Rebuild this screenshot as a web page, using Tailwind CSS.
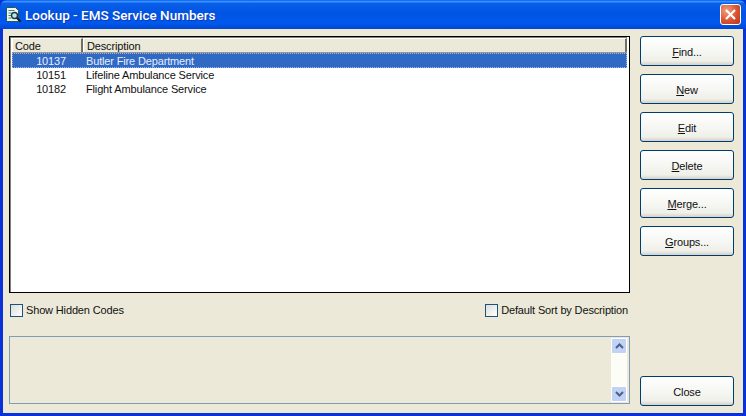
<!DOCTYPE html>
<html lang="en">
<head>
  <meta charset="UTF-8">
  <title>Lookup - EMS Service Numbers</title>
  <script src="https://cdn.jsdelivr.net/npm/@tailwindcss/browser@4"></script>
</head>
<body class="w-[746px] h-[416px] overflow-hidden bg-[#0831d9] font-['Liberation_Sans',sans-serif] text-[11px] tracking-[-0.15px] text-[#111]">
  <div class="flex flex-col h-[416px] rounded-t-[7px] bg-[#0831d9] overflow-hidden">

    <!-- Title bar -->
    <div class="flex items-center h-[29px] pl-[5px] pr-[5px] shrink-0 bg-[linear-gradient(180deg,#0058ee_0%,#3a93ff_5%,#0a5fe8_12%,#0054e3_45%,#0058ee_80%,#0046cf_100%)]">
      <svg width="18" height="18" viewBox="0 0 18 18" class="shrink-0">
        <path d="M1.5 1.5h9l3 3v11h-12z" fill="#f4f4ee" stroke="#1f5a66"/>
        <path d="M3.5 4.5h6M3.5 7h3M3.5 9.5h2.5M3.5 12h2.5" stroke="#2f8a84" stroke-width="1"/>
        <circle cx="9.5" cy="9.5" r="3" fill="#bfe6e6" stroke="#1c3a40" stroke-width="1.4"/>
        <path d="M11.7 11.7l4 4" stroke="#10202a" stroke-width="2"/>
      </svg>
      <span class="ml-[2px] pt-px font-['Roboto',sans-serif] tracking-normal text-[13.5px] font-medium text-white [text-shadow:1px_1px_0_#0f3bb0]">Lookup - EMS Service Numbers</span>
      <div class="ml-auto w-[21px] h-[21px] rounded-[3px] border border-white flex items-center justify-center bg-[radial-gradient(circle_at_30%_30%,#f0a080,#d8532f_55%,#b8341a)]">
        <svg width="13" height="13" viewBox="0 0 13 13"><path d="M2 2l9 9M11 2l-9 9" stroke="#fff" stroke-width="2.2"/></svg>
      </div>
    </div>

    <!-- Window body -->
    <div class="flex flex-1 mx-[3px] mb-[3px] bg-[#ece9d8] pl-[6px] pr-[10px] pt-[7px] pb-[7px]">
      <div class="flex flex-col w-[621px] shrink-0">

        <!-- Code list -->
        <div class="h-[257px] border border-black bg-white pr-[2px]">
          <div class="h-full border-l border-t border-[#808080] pl-px">
            <div class="flex h-[15px] bg-[#ece9d8] border-b border-[#9a9888]">
              <div class="w-[71px] pl-[2px] leading-[15px] border-t border-l border-white border-r-2 border-r-[#716f64]">Code</div>
              <div class="flex-1 pl-[3px] leading-[15px] border-t border-l border-white border-r-2 border-r-[#716f64]">Description</div>
            </div>
            <div class="flex h-[15px] leading-[16px] bg-[#316ac5] text-[#e8eefa] outline-1 -outline-offset-1 outline-dotted outline-[#9db7e2]">
              <div class="w-[54px] text-right">10137</div>
              <div class="ml-[20px]">Butler Fire Department</div>
            </div>
            <div class="flex h-[14px] leading-[14px]">
              <div class="w-[54px] text-right">10151</div>
              <div class="ml-[20px]">Lifeline Ambulance Service</div>
            </div>
            <div class="flex h-[14px] leading-[14px]">
              <div class="w-[54px] text-right">10182</div>
              <div class="ml-[20px]">Flight Ambulance Service</div>
            </div>
          </div>
        </div>

        <!-- Options -->
        <div class="flex justify-between items-center mt-[10px] h-[14px] pl-px pr-[2px]">
          <label class="flex items-center gap-[3px]">
            <span class="w-[13px] h-[13px] border border-[#1c5180] bg-[linear-gradient(135deg,#dcdcd7,#ffffff)]"></span>
            Show Hidden Codes
          </label>
          <label class="flex items-center gap-[3px]">
            <span class="w-[13px] h-[13px] border border-[#1c5180] bg-[linear-gradient(135deg,#dcdcd7,#ffffff)]"></span>
            Default Sort by Description
          </label>
        </div>

        <!-- Notes box -->
        <div class="flex justify-end mt-[19px] h-[68px] border border-[#7f9db9] bg-[#ece9d8]">
          <div class="flex flex-col justify-between w-[16px] mr-[2px] my-px bg-[#fdfdf8]">
            <div class="h-[16px] rounded-[2px] border border-white bg-[#c1d2f7] flex items-center justify-center">
              <svg width="9" height="6" viewBox="0 0 9 6"><path d="M1 5l3.5-3.5L8 5" fill="none" stroke="#4d6185" stroke-width="2"/></svg>
            </div>
            <div class="h-[16px] rounded-[2px] border border-white bg-[#c1d2f7] flex items-center justify-center">
              <svg width="9" height="6" viewBox="0 0 9 6"><path d="M1 1l3.5 3.5L8 1" fill="none" stroke="#4d6185" stroke-width="2"/></svg>
            </div>
          </div>
        </div>
      </div>

      <!-- Buttons -->
      <div class="flex flex-col ml-[10px] w-[94px] shrink-0">
        <button class="h-[30px] mb-[8px] pt-[2px] rounded-[3px] border border-[#003c74] bg-[linear-gradient(180deg,#ffffff,#f0f0ea_85%,#d6d0c5)]"><u>F</u>ind...</button>
        <button class="h-[30px] mb-[8px] pt-[2px] rounded-[3px] border border-[#003c74] bg-[linear-gradient(180deg,#ffffff,#f0f0ea_85%,#d6d0c5)]"><u>N</u>ew</button>
        <button class="h-[30px] mb-[8px] pt-[2px] rounded-[3px] border border-[#003c74] bg-[linear-gradient(180deg,#ffffff,#f0f0ea_85%,#d6d0c5)]"><u>E</u>dit</button>
        <button class="h-[30px] mb-[8px] pt-[2px] rounded-[3px] border border-[#003c74] bg-[linear-gradient(180deg,#ffffff,#f0f0ea_85%,#d6d0c5)]"><u>D</u>elete</button>
        <button class="h-[30px] mb-[8px] pt-[2px] rounded-[3px] border border-[#003c74] bg-[linear-gradient(180deg,#ffffff,#f0f0ea_85%,#d6d0c5)]"><u>M</u>erge...</button>
        <button class="h-[30px] pt-[2px] rounded-[3px] border border-[#003c74] bg-[linear-gradient(180deg,#ffffff,#f0f0ea_85%,#d6d0c5)]"><u>G</u>roups...</button>
        <button class="h-[30px] mt-auto pt-[2px] rounded-[3px] border border-[#003c74] bg-[linear-gradient(180deg,#ffffff,#f0f0ea_85%,#d6d0c5)]">Close</button>
      </div>
    </div>
  </div>
</body>
</html>
